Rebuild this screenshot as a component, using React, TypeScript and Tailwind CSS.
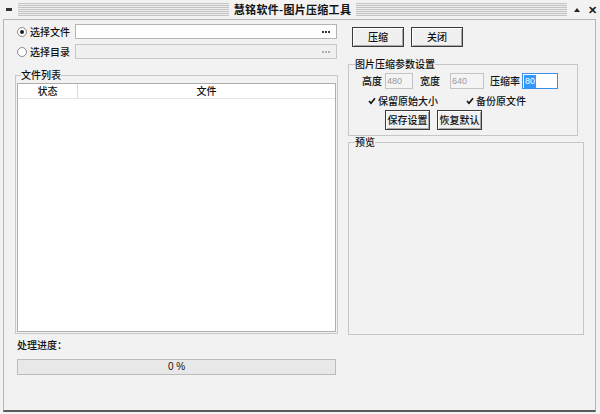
import React from "react";

function Radio({ checked }: { checked?: boolean }) {
  return (
    <span className="w-[10px] h-[10px] rounded-full border border-[#8a8a8a] bg-white flex items-center justify-center shrink-0">
      {checked && <span className="w-[4px] h-[4px] rounded-full bg-[#222]" />}
    </span>
  );
}

function Check() {
  return (
    <span className="w-[9px] h-[9px] flex items-center justify-center shrink-0">
      <svg width="8" height="8" viewBox="0 0 8 8">
        <path d="M1 4 L3 6.2 L7 1.2" stroke="#111" strokeWidth="1.6" fill="none" />
      </svg>
    </span>
  );
}

function Btn({ children, w }: { children: React.ReactNode; w: string }) {
  return (
    <div
      className={`${w} h-[20px] border border-[#3a3a3a] bg-[#f0f0f0] shadow-[inset_1px_1px_0_#ffffff,inset_-1px_-1px_0_#a8a8a8] flex items-center justify-center whitespace-nowrap`}
    >
      {children}
    </div>
  );
}

function Dots({ color }: { color: string }) {
  return (
    <span className="flex gap-[1px] items-center">
      <span className={`w-[2px] h-[2px] ${color}`} />
      <span className={`w-[2px] h-[2px] ${color}`} />
      <span className={`w-[2px] h-[2px] ${color}`} />
    </span>
  );
}

export default function App() {
  return (
    <div className="w-[600px] h-[414px] bg-[#f2f2f2] font-['Noto_Sans_CJK_SC',sans-serif] font-medium text-[10px] leading-[12px] text-[#111] flex flex-col overflow-hidden">
      {/* Title bar */}
      <div className="h-[19px] flex items-center shrink-0">
        <div className="ml-[6px] w-[6px] h-[3px] bg-[#333]" />
        <div className="ml-[6px] w-[549px] h-[13px] flex items-center justify-center bg-[repeating-linear-gradient(to_bottom,#c4c4c4_0px,#c4c4c4_1px,#ececec_1px,#ececec_2px)]">
          <span className="bg-[#f2f2f2] px-[5px] font-bold text-[11px] leading-[13px] tracking-[0.3px]">
            慧铭软件-图片压缩工具
          </span>
        </div>
        <div className="ml-[7px] w-0 h-0 border-l-[3px] border-r-[3px] border-b-[4px] border-l-transparent border-r-transparent border-b-[#222]" />
        <div className="ml-[8px] text-[11px] leading-[11px] font-bold text-[#222]">✕</div>
      </div>

      {/* Body */}
      <div className="ml-[3px] w-[593px] flex-1 mb-[2px] border-t border-l border-r border-[#b5b5b5] border-b-2 border-b-[#5a5a5a] flex items-start">
        {/* Left column */}
        <div className="ml-[11px] w-[323px] pt-[4px] flex flex-col">
          <div className="h-[15px] flex items-center">
            <span className="ml-[2px]"><Radio checked /></span>
            <span className="ml-[3px] w-[45px]">选择文件</span>
            <div className="w-[262px] h-[15px] bg-white border border-[#b4b4b4] flex items-center justify-end pr-[6px]">
              <Dots color="bg-[#333]" />
            </div>
          </div>
          <div className="mt-[5px] h-[15px] flex items-center">
            <span className="ml-[2px]"><Radio /></span>
            <span className="ml-[3px] w-[45px]">选择目录</span>
            <div className="w-[262px] h-[15px] bg-[#f0f0f0] border border-[#c8c8c8] flex items-center justify-end pr-[6px]">
              <Dots color="bg-[#b0b0b0]" />
            </div>
          </div>

          <fieldset className="mt-[10px] w-[323px] h-[265px] border border-[#c8c8c8]">
            <legend className="ml-[5px] leading-[12px]">文件列表</legend>
            <div className="ml-[1px] mt-[2px] w-[319px] h-[249px] bg-white border border-[#adadad] flex flex-col">
              <div className="h-[15px] flex border-b border-[#e2e2e2] shrink-0">
                <div className="w-[60px] border-r border-[#d8d8d8] flex items-center justify-center">状态</div>
                <div className="flex-1 flex items-center justify-center">文件</div>
              </div>
            </div>
          </fieldset>

          <div className="mt-[5px] pl-[2px]">处理进度：</div>
          <div className="mt-[8px] ml-[2px] w-[319px] h-[16px] bg-[#e8e8e8] border border-[#bcbcbc] flex items-center justify-center font-['Liberation_Sans',sans-serif] font-normal text-[10px]">
            0 %
          </div>
        </div>

        {/* Right column */}
        <div className="ml-[10px] w-[236px] pt-[7px] flex flex-col">
          <div className="flex ml-[4px]">
            <Btn w="w-[52px]">压缩</Btn>
            <div className="ml-[7px]">
              <Btn w="w-[52px]">关闭</Btn>
            </div>
          </div>

          <fieldset className="mt-[11px] w-[230px] h-[78px] border border-[#c6c6c6]">
            <legend className="ml-[6px] leading-[12px]">图片压缩参数设置</legend>
            <div className="mt-[3px] h-[16px] flex items-center pl-[13px]">
              <span>高度</span>
              <div className="ml-[3px] w-[28px] h-[16px] border border-[#c4c4c4] bg-[#f4f4f4] flex items-center pl-[1px] text-[9px] font-normal text-[#9a9a9a] font-['Liberation_Sans',sans-serif]">480</div>
              <span className="ml-[7px]">宽度</span>
              <div className="ml-[10px] w-[34px] h-[16px] border border-[#c4c4c4] bg-[#f4f4f4] flex items-center pl-[1px] text-[9px] font-normal text-[#9a9a9a] font-['Liberation_Sans',sans-serif]">640</div>
              <span className="ml-[6px]">压缩率</span>
              <div className="ml-[2px] w-[36px] h-[16px] border border-[#3c8fe6] bg-white flex items-center pl-[1px]">
                <span className="bg-[#3399ff] text-white text-[9px] font-normal leading-[13px] px-[1px] font-['Liberation_Sans',sans-serif]">80</span>
              </div>
            </div>
            <div className="mt-[6px] h-[12px] flex items-center pl-[18px]">
              <Check />
              <span className="ml-[2px]">保留原始大小</span>
              <span className="ml-[27px]"><Check /></span>
              <span className="ml-[2px]">备份原文件</span>
            </div>
            <div className="mt-[3px] flex pl-[36px]">
              <Btn w="w-[45px]">保存设置</Btn>
              <div className="ml-[7px]">
                <Btn w="w-[45px]">恢复默认</Btn>
              </div>
            </div>
          </fieldset>

          <fieldset className="w-[236px] h-[199px] border border-[#c6c6c6]">
            <legend className="ml-[6px] leading-[12px]">预览</legend>
          </fieldset>
        </div>
      </div>
    </div>
  );
}
